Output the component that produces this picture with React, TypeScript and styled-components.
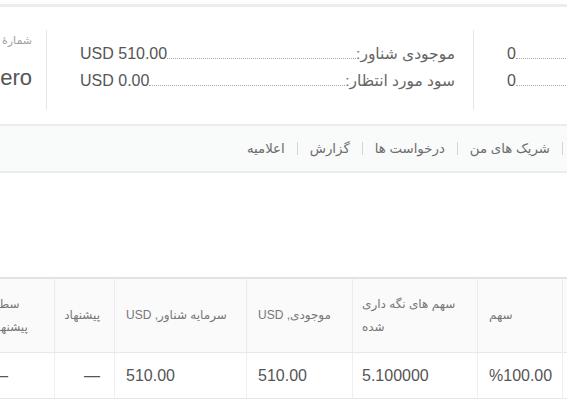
import styled, { createGlobalStyle } from "styled-components";

const GlobalStyle = createGlobalStyle`
  html, body {
    margin: 0;
    padding: 0;
    background: #fff;
  }
  body {
    font-family: "Liberation Sans", "DejaVu Sans", Arial, sans-serif;
    color: #555;
    overflow: hidden;
  }
  * {
    box-sizing: border-box;
  }
`;

const Page = styled.div`
  width: 567px;
  height: 410px;
  overflow: hidden;
  direction: rtl;
`;

const TopRule = styled.div`
  margin-top: 4px;
  height: 3px;
  background: #ededed;
`;

const Summary = styled.div`
  display: flex;
  height: 80px;
  margin: 23px -333px 14px 0;
`;

const AccountCol = styled.div`
  flex: 0 0 240px;
  padding-right: 14px;
  text-align: right;
  white-space: nowrap;
`;

const AccountLabel = styled.div`
  font-size: 11px;
  line-height: 20px;
  color: #a0a0a0;
`;

const AccountType = styled.div`
  margin-top: 14px;
  font-size: 22px;
  line-height: 28px;
  color: #555;
`;

const StatCol = styled.div`
  flex: 0 0 427px;
  padding: 10px 18px 0 33px;
  border-left: 1px solid #e6e6e6;
`;

const StatRow = styled.div`
  display: flex;
  align-items: baseline;
  height: 27px;
  line-height: 27px;
`;

const StatLabel = styled.span`
  font-size: 15.5px;
  color: #666;
  white-space: nowrap;
`;

const Dots = styled.span`
  flex: 1;
  border-bottom: 1px dotted #a8a8a8;
`;

const StatValue = styled.span`
  direction: ltr;
  unicode-bidi: isolate;
  font-size: 16px;
  color: #555;
  white-space: nowrap;
`;

const Nav = styled.nav`
  display: flex;
  align-items: center;
  gap: 12px;
  height: 49px;
  padding-right: 4px;
  background: #f9fafa;
  border-top: 2px solid #ececec;
  border-bottom: 2px solid #ececec;
`;

const NavSep = styled.span`
  width: 1px;
  height: 13px;
  background: #d4d4d4;
`;

const NavLink = styled.a`
  font-size: 13.3px;
  color: #6c6c6c;
  text-decoration: none;
  white-space: nowrap;
`;

const TableWrap = styled.div`
  margin: 104px -55px 0 0;
`;

const Table = styled.table`
  width: 637px;
  table-layout: fixed;
  border-collapse: separate;
  border-spacing: 0;
  border-top: 2px solid #e3e5dc;
`;

const Col = styled.col<{ $w: number }>`
  width: ${p => p.$w}px;
`;

const Th = styled.th<{ $align?: "left" | "right"; $pad?: number }>`
  height: 74px;
  padding: 0 ${p => (p.$align === "right" ? p.$pad ?? 11 : 8)}px 0 ${p => (p.$align === "right" ? 8 : p.$pad ?? 11)}px;
  background: #fafafa;
  border-left: 1px solid #ececec;
  border-bottom: 1px solid #e8e8e8;
  font-weight: normal;
  font-size: 12px;
  line-height: 23px;
  color: #777;
  text-align: ${p => p.$align ?? "left"};
  white-space: pre-line;
  vertical-align: middle;
`;

const Td = styled.td<{ $align?: "left" | "right"; $pad?: number }>`
  height: 46px;
  padding: 0 ${p => (p.$align === "right" ? p.$pad ?? 11 : 8)}px 0 ${p => (p.$align === "right" ? 8 : p.$pad ?? 11)}px;
  background: #fff;
  border-left: 1px solid #efefef;
  border-bottom: 1px solid #e6e6e6;
  font-size: 16px;
  color: #555;
  text-align: ${p => p.$align ?? "left"};
  vertical-align: middle;
  white-space: nowrap;
`;

const Num = styled.bdi`
  direction: ltr;
`;

type Stat = { label: string; value: string };

const middleStats: Stat[] = [
  { label: "موجودی شناور:", value: "USD 510.00" },
  { label: "سود مورد انتظار:", value: "USD 0.00" },
];

const rightStats: Stat[] = [
  { label: "سهام فعال:", value: "0" },
  { label: "سفارش های باز:", value: "0" },
];

const navItems = ["شریک های من", "درخواست ها", "گزارش", "اعلامیه"];

type Column = {
  title: string;
  value: string;
  width: number;
  align?: "left" | "right";
  pad?: number;
};

const columns: Column[] = [
  { title: "نماد", value: "—", width: 60 },
  { title: "سهم", value: "%100.00", width: 85 },
  { title: "سهم های نگه داری\nشده", value: "5.100000", width: 125, pad: 9 },
  { title: "موجودی, USD", value: "510.00", width: 106 },
  { title: "سرمایه شناور, USD", value: "510.00", width: 132 },
  { title: "پیشنهاد", value: "—", width: 60, align: "right", pad: 14 },
  { title: "سطح\nپیشنهاد", value: "—", width: 69, pad: 6 },
];

function StatList({ stats }: { stats: Stat[] }) {
  return (
    <StatCol>
      {stats.map(s => (
        <StatRow key={s.label}>
          <StatLabel>{s.label}</StatLabel>
          <Dots />
          <StatValue>{s.value}</StatValue>
        </StatRow>
      ))}
    </StatCol>
  );
}

export default function App() {
  return (
    <Page>
      <GlobalStyle />
      <TopRule />
      <Summary>
        <StatList stats={rightStats} />
        <StatList stats={middleStats} />
        <AccountCol>
          <AccountLabel>شمارهٔ حساب</AccountLabel>
          <AccountType>Zero</AccountType>
        </AccountCol>
      </Summary>
      <Nav>
        {navItems.flatMap(item => [
          <NavSep key={item + "-sep"} />,
          <NavLink key={item} href="#">{item}</NavLink>,
        ])}
      </Nav>
      <TableWrap>
        <Table>
          <colgroup>
            {columns.map(c => (
              <Col key={c.title} $w={c.width} />
            ))}
          </colgroup>
          <thead>
            <tr>
              {columns.map(c => (
                <Th key={c.title} $align={c.align} $pad={c.pad}>{c.title}</Th>
              ))}
            </tr>
          </thead>
          <tbody>
            <tr>
              {columns.map(c => (
                <Td key={c.title} $align={c.align} $pad={c.pad}>
                  <Num>{c.value}</Num>
                </Td>
              ))}
            </tr>
          </tbody>
        </Table>
      </TableWrap>
    </Page>
  );
}
